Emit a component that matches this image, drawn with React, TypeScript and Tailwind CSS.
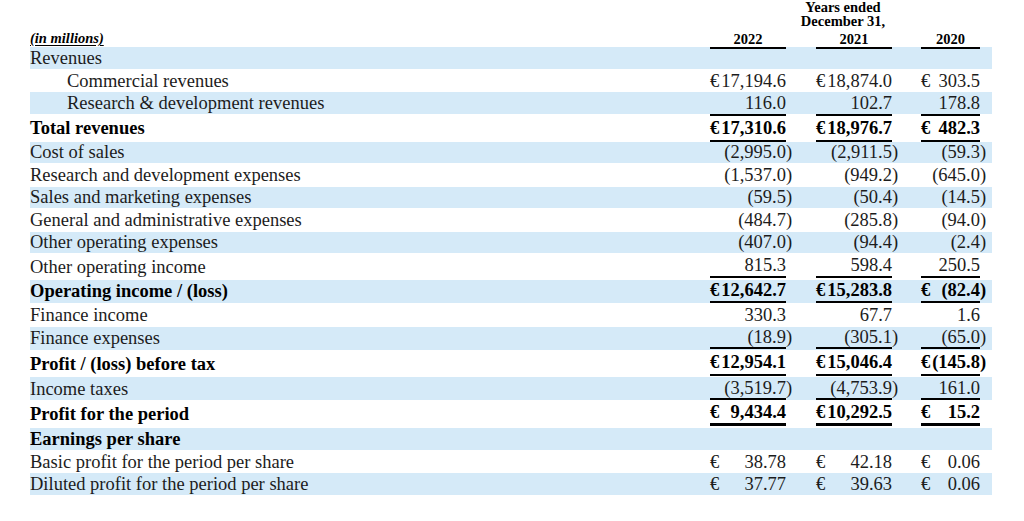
import React from "react";

type Val = { e?: boolean; v: string };
type Row = {
  label: string;
  h: string;
  blue?: boolean;
  bold?: boolean;
  indent?: boolean;
  vals?: Val[];
  line?: string;
};

const E = (v: string): Val => ({ e: true, v });
const N = (v: string): Val => ({ v });

const rows: Row[] = [
  { label: "Revenues", h: "h-[22px]", blue: true },
  { label: "Commercial revenues", h: "h-[23px]", indent: true, vals: [E("17,194.6"), E("18,874.0"), E("303.5")] },
  { label: "Research & development revenues", h: "h-[22px]", blue: true, indent: true, vals: [N("116.0"), N("102.7"), N("178.8")] },
  { label: "Total revenues", h: "h-[27.5px]", bold: true, vals: [E("17,310.6"), E("18,976.7"), E("482.3")], line: "border-t-2 border-b-2 border-black" },
  { label: "Cost of sales", h: "h-[21.5px]", blue: true, vals: [N("(2,995.0)"), N("(2,911.5)"), N("(59.3)")] },
  { label: "Research and development expenses", h: "h-[23.5px]", vals: [N("(1,537.0)"), N("(949.2)"), N("(645.0)")] },
  { label: "Sales and marketing expenses", h: "h-[21.5px]", blue: true, vals: [N("(59.5)"), N("(50.4)"), N("(14.5)")] },
  { label: "General and administrative expenses", h: "h-[23.5px]", vals: [N("(484.7)"), N("(285.8)"), N("(94.0)")] },
  { label: "Other operating expenses", h: "h-[21.5px]", blue: true, vals: [N("(407.0)"), N("(94.4)"), N("(2.4)")] },
  { label: "Other operating income", h: "h-[27px]", vals: [N("815.3"), N("598.4"), N("250.5")], line: "border-b-2 border-black mb-[2px]" },
  { label: "Operating income / (loss)", h: "h-[22.5px]", blue: true, bold: true, vals: [E("12,642.7"), E("15,283.8"), E("(82.4)")], line: "border-b-2 border-black" },
  { label: "Finance income", h: "h-[24px]", vals: [N("330.3"), N("67.7"), N("1.6")] },
  { label: "Finance expenses", h: "h-[23.5px]", blue: true, vals: [N("(18.9)"), N("(305.1)"), N("(65.0)")], line: "border-b-2 border-black mb-[1px]" },
  { label: "Profit / (loss) before tax", h: "h-[27px]", bold: true, vals: [E("12,954.1"), E("15,046.4"), E("(145.8)")], line: "border-b-2 border-black mb-[1px]" },
  { label: "Income taxes", h: "h-[23px]", blue: true, vals: [N("(3,519.7)"), N("(4,753.9)"), N("161.0")], line: "border-b-2 border-black" },
  { label: "Profit for the period", h: "h-[28px]", bold: true, vals: [E("9,434.4"), E("10,292.5"), E("15.2")], line: "border-b-[3px] border-black mb-[2px]" },
  { label: "Earnings per share", h: "h-[22px]", blue: true, bold: true },
  { label: "Basic profit for the period per share", h: "h-[23px]", vals: [E("38.78"), E("42.18"), E("0.06")] },
  { label: "Diluted profit for the period per share", h: "h-[22px]", blue: true, vals: [E("37.77"), E("39.63"), E("0.06")] },
];

const colW = ["w-[76px]", "w-[76px] ml-[30px]", "w-[59px] ml-[29px]"];

function Num({ val, w, line }: { val?: Val; w: string; line?: string }) {
  const v = val?.v ?? "";
  const neg = v.endsWith(")");
  const main = neg ? v.slice(0, -1) : v;
  return (
    <div className={`flex shrink-0 items-center justify-between ${w} ${line ?? ""}`}>
      <span>{val?.e ? "€" : ""}</span>
      <span className="whitespace-nowrap">
        {main}
        {neg && <span className="inline-block w-0">)</span>}
      </span>
    </div>
  );
}

export default function App() {
  return (
    <div className="h-[521px] w-[1024px] bg-white pl-[30px] pr-[32px] font-['Liberation_Serif','Times_New_Roman',serif] text-[#1c1c1c]">
      {/* header */}
      <div className="flex h-[47px] items-end text-[14.5px] font-bold text-black">
        <div className="flex-1 pb-[2px] leading-[14px]">
          <span className="italic underline underline-offset-2">(in millions)</span>
        </div>
        <div className="relative -mb-[2px] flex w-[76px] shrink-0 justify-center border-b-2 border-black pb-[1px] leading-[14px]">2022</div>
        <div className="relative -mb-[2px] ml-[30px] flex w-[76px] shrink-0 flex-col items-center">
          <div className="flex w-[54px] justify-center self-start whitespace-nowrap leading-[14px]">Years ended</div>
          <div className="flex w-[54px] justify-center self-start whitespace-nowrap leading-[14px]">December 31,</div>
          <div className="mt-[4px] flex w-full justify-center border-b-2 border-black pb-[1px] leading-[14px]">2021</div>
        </div>
        <div className="relative -mb-[2px] ml-[29px] flex w-[59px] shrink-0 justify-center border-b-2 border-black pb-[1px] leading-[14px]">2020</div>
        <div className="w-[12px] shrink-0" />
      </div>
      {rows.map((r, i) => (
        <div
          key={i}
          className={`flex text-[18.5px] leading-[22px] ${r.h} ${r.blue ? "bg-[#d5eaf8]" : ""} ${r.bold ? "font-bold text-black" : ""}`}
        >
          <div className={`flex flex-1 items-center whitespace-nowrap ${r.indent ? "pl-[37px]" : ""}`}>{r.label}</div>
          {r.vals ? (
            r.vals.map((v, j) => <Num key={j} val={v} w={colW[j]} line={r.line} />)
          ) : (
            <>
              <div className="w-[76px] shrink-0" />
              <div className="ml-[30px] w-[76px] shrink-0" />
              <div className="ml-[29px] w-[59px] shrink-0" />
            </>
          )}
          <div className="w-[12px] shrink-0" />
        </div>
      ))}
    </div>
  );
}
